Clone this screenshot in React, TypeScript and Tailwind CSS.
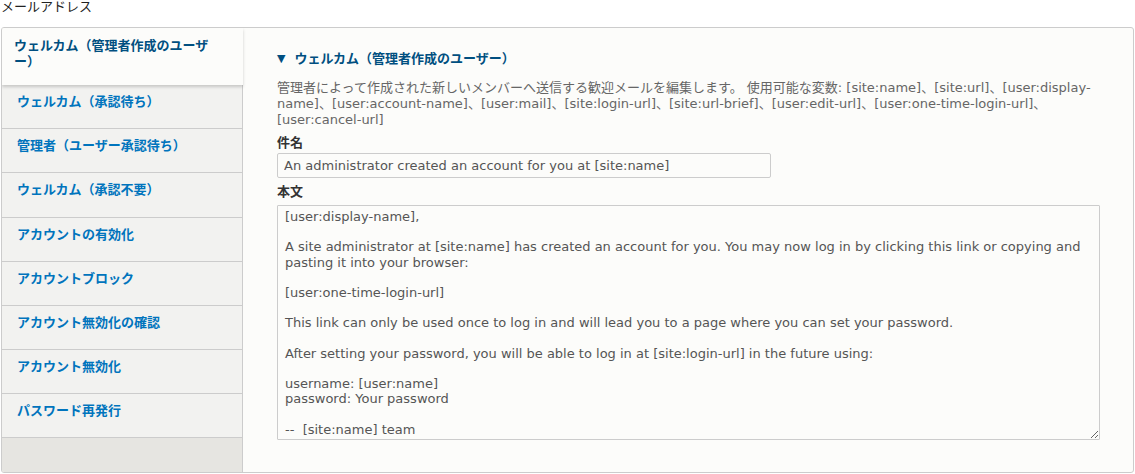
const tabs = [
  'ウェルカム（承認待ち）',
  '管理者（ユーザー承認待ち）',
  'ウェルカム（承認不要）',
  'アカウントの有効化',
  'アカウントブロック',
  'アカウント無効化の確認',
  'アカウント無効化',
  'パスワード再発行',
];

const body = `[user:display-name],

A site administrator at [site:name] has created an account for you. You may now log in by clicking this link or copying and pasting it into your browser:

[user:one-time-login-url]

This link can only be used once to log in and will lead you to a page where you can set your password.

After setting your password, you will be able to log in at [site:login-url] in the future using:

username: [user:name]
password: Your password

--  [site:name] team`;

export default function App() {
  return (
    <div
      className="h-[474px] w-[1135px] overflow-hidden bg-white text-[13px] text-[#333]"
      style={{ fontFamily: '"DejaVu Sans", "Noto Sans CJK JP", sans-serif' }}
    >
      <div className="h-[27px] pl-px leading-[14px] text-[#222]">メールアドレス</div>
      <div className="mx-px flex h-[446px] overflow-hidden rounded-[3px] border border-[#ccc] bg-[#fcfcfa]">
        {/* tabs */}
        <div className="flex w-[241px] shrink-0 flex-col border-r border-[#ccc] bg-[#e6e5e1]">
          <div className="relative z-10 h-[57px] w-[241px] bg-[#fcfcfa] pl-[12px] pr-4 pt-[10px] font-semibold leading-[16px] text-[#004f80] shadow-[0_2px_3px_rgba(0,0,0,0.18)]">
            ウェルカム（管理者作成のユーザー）
          </div>
          {tabs.map((t, i) => (
            <div
              key={t}
              className={`${i === 2 ? 'h-[45px]' : 'h-[44px]'} border-b border-[#ccc] bg-[#f2f2f0] pl-[15px] pt-[9px] font-semibold leading-[16px] text-[#0074bd]`}
            >
              {t}
            </div>
          ))}
          <div className="flex-1" />
        </div>
        {/* pane */}
        <div className="flex-1 pl-[34px] pr-[34px] pt-[23px]">
          <div className="flex items-center font-semibold leading-[16px] text-[#004f80]">
            <span className="mr-[9px] text-[11px]">▼</span>
            ウェルカム（管理者作成のユーザー）
          </div>
          <p className="mt-[13px] leading-[16px] text-[#666]">
            管理者によって作成された新しいメンバーへ送信する歓迎メールを編集します。 使用可能な変数: [site:name]、[site:url]、[user:display-name]、[user:account-name]、[user:mail]、[site:login-url]、[site:url-brief]、[user:edit-url]、[user:one-time-login-url]、[user:cancel-url]
          </p>
          <div className="mt-[7px] font-semibold leading-[16px] text-[#333]">件名</div>
          <input
            readOnly
            value="An administrator created an account for you at [site:name]"
            className="mt-[2px] h-[25px] w-[494px] rounded-[2px] border border-[#ccc] bg-[#fcfcfa] px-[6px] text-[13px] text-[#555] outline-none"
          />
          <div className="mt-[6px] font-semibold leading-[16px] text-[#333]">本文</div>
          <textarea
            readOnly
            value={body}
            className="mt-[5px] h-[235px] w-[823px] rounded-[1px] border border-[#ccc] bg-[#fcfcfa] px-[7px] py-[3px] text-[13px] leading-[15.2px] text-[#555] outline-none"
          />
        </div>
      </div>
    </div>
  );
}
